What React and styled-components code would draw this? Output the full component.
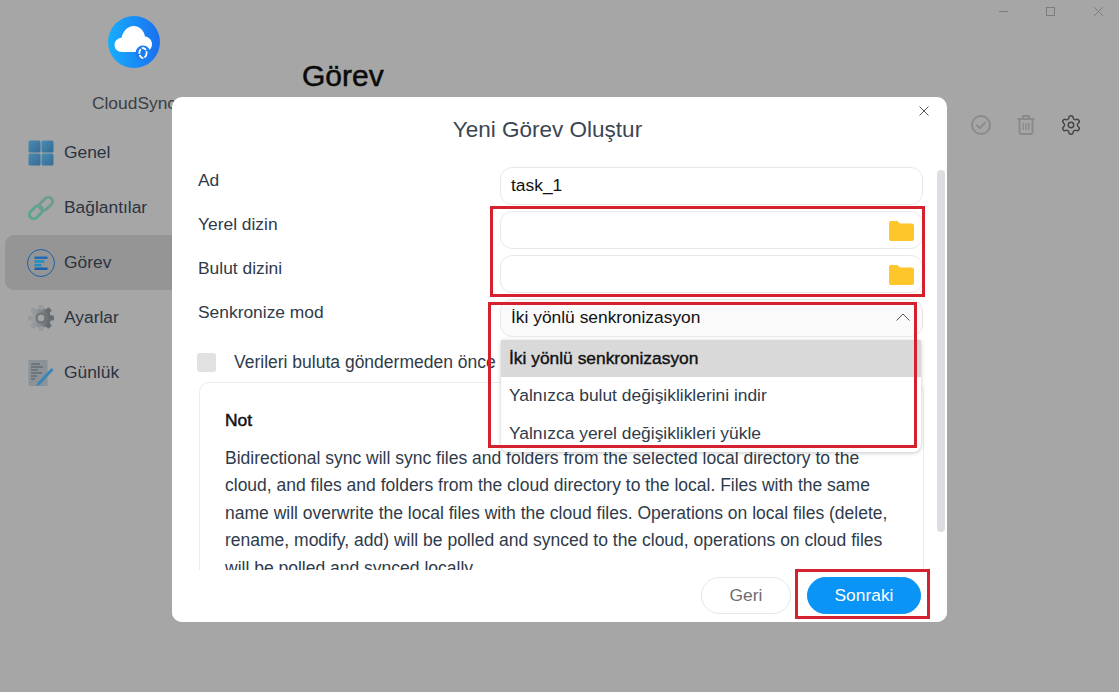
import React from "react";
import styled, { createGlobalStyle } from "styled-components";
import { Settings } from "lucide-react";

const Global = createGlobalStyle`
  html, body {
    margin: 0;
    padding: 0;
    height: 100%;
    overflow: hidden;
  }
  body {
    font-family: "Liberation Sans", Arial, sans-serif;
    background: #a6a6a6;
  }
`;

const Page = styled.div`
  position: relative;
  width: 1119px;
  height: 692px;
  overflow: hidden;
  display: flex;
  background: #a6a6a6;
`;

const Sidebar = styled.aside`
  width: 172px;
  flex: none;
  padding: 16px 0 0 5px;
  box-sizing: border-box;
`;

const Brand = styled.div`
  width: 258px;
  display: flex;
  flex-direction: column;
  align-items: center;
  gap: 26px;
  color: #3a3f45;
  font-size: 17.4px;
  line-height: 18px;
  margin-bottom: 13px;
`;

const NavList = styled.nav`
  display: flex;
  flex-direction: column;
  width: 200px;
`;

const NavItem = styled.div`
  height: 55px;
  display: flex;
  align-items: center;
  gap: 10px;
  padding-left: 23px;
  border-radius: 9px;
  font-size: 17.4px;
  color: #2b3340;
  background: ${(p) => (p.$active ? "#959595" : "transparent")};
  svg {
    flex: none;
    width: 26px;
    height: 26px;
    overflow: visible;
  }
`;

const Main = styled.main`
  flex: 1;
  padding: 60px 0 0 130px;
  position: relative;
`;

const PageTitle = styled.h1`
  margin: 0;
  font-size: 30px;
  line-height: 32px;
  font-weight: 400;
  color: #0a0a0a;
  -webkit-text-stroke: 0.5px #0a0a0a;
`;

const WindowControls = styled.div`
  position: absolute;
  top: 3px;
  right: -3px;
  display: flex;
  align-items: center;
  color: #7d7d7d;
`;

const WinButton = styled.span`
  width: 47.500px;
  height: 16px;
  display: flex;
  align-items: center;
  justify-content: center;
  svg {
    width: 11px;
    height: 11px;
  }
`;

const Toolbar = styled.div`
  position: absolute;
  top: 112px;
  right: 37px;
  display: flex;
  gap: 23px;
`;

const ToolIcon = styled.span`
  display: block;
  width: 22px;
  height: 26px;
  color: ${(p) => (p.$on ? "#454545" : "#8b8b8b")};
  svg {
    width: 22px;
    height: 26px;
    display: block;
  }
`;

const Modal = styled.section`
  position: absolute;
  left: 172px;
  top: 97px;
  width: 775px;
  height: 525px;
  background: #fff;
  border-radius: 10px;
  overflow: hidden;
`;

const CloseBtn = styled.span`
  position: absolute;
  right: 17px;
  top: 8px;
  width: 12px;
  height: 12px;
  color: #555;
  svg {
    display: block;
    width: 12px;
    height: 12px;
  }
`;

const ModalTitle = styled.h2`
  margin: 0;
  padding: 20px 24px 0 0;
  height: 70px;
  box-sizing: border-box;
  text-align: center;
  font-size: 22.500px;
  line-height: 26px;
  font-weight: 400;
  color: #3b4654;
`;

const Body = styled.div`
  position: relative;
  padding: 0 24px 0 26px;
`;

const FormRow = styled.div`
  display: grid;
  grid-template-columns: 302px 423px;
  height: 38px;
  margin-bottom: 6px;
`;

const Label = styled.label`
  font-size: 17.400px;
  line-height: 27px;
  color: #2f3b4a;
`;

const Field = styled.div`
  position: relative;
  box-sizing: border-box;
  height: 38px;
  border: 1px solid #e8e8e8;
  border-radius: 12px;
  display: flex;
  align-items: center;
  justify-content: space-between;
  padding: 0 8px 2px 10px;
  font-size: 17.400px;
  color: #111;
  background: ${(p) => (p.$open ? "#fafafa" : "#fff")};
`;

const Chevron = styled.svg`
  width: 14px;
  height: 8px;
  margin-right: 4px;
  color: #555;
`;

const FolderIcon = styled.svg`
  width: 26px;
  height: 22px;
  margin-top: 3px;
`;

const Menu = styled.ul`
  position: absolute;
  left: 0;
  top: 40px;
  z-index: 3;
  width: 420px;
  margin: 0;
  padding: 0;
  list-style: none;
  background: #fff;
  border-radius: 0 0 8px 8px;
  box-shadow: 0 1px 4px rgba(0, 0, 0, 0.22);
`;

const MenuItem = styled.li`
  height: 37.300px;
  line-height: 36px;
  padding-left: 8px;
  font-size: 17.400px;
  color: ${(p) => (p.$selected ? "#111" : "#2f3b4a")};
  background: ${(p) => (p.$selected ? "#d9d9d9" : "transparent")};
  -webkit-text-stroke: ${(p) => (p.$selected ? "0.4px #111" : "0")};
`;

const CheckRow = styled.div`
  display: flex;
  align-items: center;
  gap: 18px;
  height: 20px;
  margin: 15px 0 0 -1px;
  font-size: 17.500px;
  color: #2f3b4a;
  white-space: nowrap;
`;

const Check = styled.span`
  width: 19px;
  height: 19px;
  border-radius: 3px;
  background: #e1e1e1;
`;

const Note = styled.div`
  margin: 10px 0 0 1px;
  width: 725px;
  height: 240px;
  box-sizing: border-box;
  padding: 27px 28px 0 25px;
  border: 1px solid #ececec;
  border-radius: 10px;
  overflow: hidden;
`;

const NoteTitle = styled.div`
  font-size: 17.400px;
  line-height: 20px;
  color: #111;
  -webkit-text-stroke: 0.5px #111;
  margin-bottom: 15px;
`;

const NoteText = styled.p`
  margin: 0;
  font-size: 17.500px;
  line-height: 27.400px;
  color: #2f3b4a;
`;

const Scrollbar = styled.div`
  position: absolute;
  right: 2px;
  top: 73px;
  width: 8px;
  height: 362px;
  border-radius: 4px;
  background: #dcdde0;
`;

const Footer = styled.div`
  position: absolute;
  left: 0;
  right: 0;
  bottom: 0;
  height: 52px;
  padding: 7px 26px 0 0;
  box-sizing: border-box;
  background: #fff;
  display: flex;
  justify-content: flex-end;
  gap: 16px;
`;

const Button = styled.button`
  width: ${(p) => (p.$primary ? "114px" : "90px")};
  height: 37px;
  border-radius: 19px;
  padding: 0;
  font: inherit;
  font-size: 17.400px;
  border: 1px solid ${(p) => (p.$primary ? "#0a94f5" : "#e6e6e6")};
  background: ${(p) => (p.$primary ? "#0a94f5" : "#fff")};
  color: ${(p) => (p.$primary ? "#fff" : "#6e6e6e")};
`;

const Callout = styled.div`
  position: absolute;
  z-index: 5;
  box-sizing: border-box;
  border: 3px solid #d5202e;
  left: ${(p) => p.$x}px;
  top: ${(p) => p.$y}px;
  width: ${(p) => p.$w}px;
  height: ${(p) => p.$h}px;
`;

const Logo = () => (
  <svg width="52" height="52" viewBox="0 0 52 52">
    <defs>
      <linearGradient id="logoBg" x1="0" y1="0" x2="1" y2="0">
        <stop offset="0" stopColor="#17aefc" />
        <stop offset="1" stopColor="#1a6ff0" />
      </linearGradient>
    </defs>
    <circle cx="26" cy="26" r="26" fill="url(#logoBg)" />
    <path
      d="M14 36c-4.500 0-7.500-3-7.500-7s3-7 7-7.300C15 15 20 10 25.500 10c6 0 10.500 4.500 11.500 10.500 4 .5 7 3.500 7 7.500 0 4.500-3.500 8-8 8z"
      fill="#fff"
    />
    <circle cx="35" cy="37" r="7.500" fill="#1a7cf2" />
    <ellipse cx="35" cy="37" rx="3.600" ry="5" fill="none" stroke="#fff" strokeWidth="1.800" strokeDasharray="5 1.200" />
  </svg>
);

const GridIcon = () => (
  <svg viewBox="0 0 26 26">
    <defs>
      <linearGradient id="gridFill" x1="0" y1="0" x2="1" y2="1">
        <stop offset="0" stopColor="#4b8db2" />
        <stop offset="1" stopColor="#346a96" />
      </linearGradient>
    </defs>
    <rect x="0.500" y="0.500" width="12" height="12" rx="1.500" fill="url(#gridFill)" />
    <rect x="13.500" y="0.500" width="12" height="12" rx="1.500" fill="url(#gridFill)" />
    <rect x="0.500" y="13.500" width="12" height="12" rx="1.500" fill="url(#gridFill)" />
    <rect x="13.500" y="13.500" width="12" height="12" rx="1.500" fill="url(#gridFill)" />
  </svg>
);

const LinkIcon = () => (
  <svg viewBox="0 0 26 26" fill="none">
    <rect x="0.500" y="13" width="15" height="8.500" rx="4.250" transform="rotate(-45 8 17.250)" stroke="#5aa68e" strokeWidth="3" />
    <rect x="10.500" y="4.500" width="15" height="8.500" rx="4.250" transform="rotate(-45 18 8.750)" stroke="#6c9c92" strokeWidth="3" />
  </svg>
);

const TaskIcon = () => (
  <svg viewBox="0 0 26 26" fill="none">
    <circle cx="13" cy="13" r="13.500" stroke="#1d5fa8" strokeWidth="1" />
    <rect x="6.500" y="6.500" width="13" height="2.500" fill="#1c6cba" />
    <rect x="6.500" y="10.200" width="10" height="2.500" fill="#1c90c4" />
    <rect x="6.500" y="13.900" width="7" height="2.500" fill="#1c90c4" />
    <rect x="6.500" y="17.500" width="13" height="2.500" fill="#1c5fb0" />
  </svg>
);

const GearIcon = () => (
  <svg viewBox="0 0 26 26">
    <defs>
      <linearGradient id="gearFill" x1="0" y1="0" x2="1" y2="0">
        <stop offset="0" stopColor="#a2a7a7" />
        <stop offset="1" stopColor="#5f676c" />
      </linearGradient>
    </defs>
    <g fill="url(#gearFill)">
      <circle cx="13" cy="13" r="10" />
    </g>
    {[0, 45, 90, 135, 180, 225, 270, 315].map((deg) => (
      <rect
        key={deg}
        x="10.500"
        y="0"
        width="5"
        height="5"
        rx="1"
        fill={deg > 0 && deg < 180 ? "#666d71" : "#959a9a"}
        transform={`rotate(${deg} 13 13)`}
      />
    ))}
    <circle cx="13" cy="13" r="5.500" fill="#70777a" />
    <circle cx="13" cy="13" r="3.200" fill="#a6a8a8" />
  </svg>
);

const LogIcon = () => (
  <svg viewBox="0 0 26 26" fill="none">
    <path d="M0.500 0h19v26h-19z" fill="#8b9298" />
    <path d="M3 4h9M3 7h12M3 10h7M3 13h11M3 16h6M3 19h4" stroke="#55595e" strokeWidth="1" />
    <path d="M10.500 24 L24.500 9" stroke="#3a85b8" strokeWidth="3" />
    <path d="M8.500 26 L9.500 23 L11.500 25z" fill="#3a85b8" />
  </svg>
);

const Folder = () => (
  <FolderIcon viewBox="0 0 26 22">
    <path
      d="M1 3a2 2 0 0 1 2-2h6.500l2.500 2.500h12a2 2 0 0 1 2 2V19a2 2 0 0 1-2 2H3a2 2 0 0 1-2-2z"
      fill="#ffc629"
    />
  </FolderIcon>
);

const items = [
  { name: "Genel", icon: <GridIcon /> },
  { name: "Bağlantılar", icon: <LinkIcon /> },
  { name: "Görev", icon: <TaskIcon />, active: true },
  { name: "Ayarlar", icon: <GearIcon /> },
  { name: "Günlük", icon: <LogIcon /> },
];

const App = () => {
  return (
    <Page>
      <Global />
      <Sidebar>
        <Brand>
          <Logo />
          <span>CloudSync</span>
        </Brand>
        <NavList>
          {items.map((item) => (
            <NavItem key={item.name} $active={item.active}>
              {item.icon}
              {item.name}
            </NavItem>
          ))}
        </NavList>
      </Sidebar>

      <Main>
        <PageTitle>Görev</PageTitle>
        <WindowControls>
          <WinButton>
            <svg viewBox="0 0 11 11"><path d="M1 5.500h9" stroke="currentColor" /></svg>
          </WinButton>
          <WinButton>
            <svg viewBox="0 0 11 11"><rect x="1.500" y="1.500" width="8" height="8" fill="none" stroke="currentColor" /></svg>
          </WinButton>
          <WinButton>
            <svg viewBox="0 0 11 11"><path d="M1 1l9 9M10 1l-9 9" stroke="currentColor" /></svg>
          </WinButton>
        </WindowControls>
        <Toolbar>
          <ToolIcon>
            <svg viewBox="0 0 22 26" fill="none" stroke="currentColor" strokeWidth="2">
              <circle cx="11" cy="13" r="9" />
              <path d="M6.500 13l3.200 3.200 5.800-5.800" />
            </svg>
          </ToolIcon>
          <ToolIcon>
            <svg viewBox="0 0 22 26" fill="none" stroke="currentColor" strokeWidth="2" strokeLinejoin="round">
              <path d="M2.500 7h17M8 7V4h6v3M4.500 7v13a2 2 0 0 0 2 2h9a2 2 0 0 0 2-2V7" />
              <path d="M8.300 11v7M11 11v7M13.700 11v7" strokeWidth="1.400" />
            </svg>
          </ToolIcon>
          <ToolIcon $on>
            <Settings size={22} strokeWidth={1.6} />
          </ToolIcon>
        </Toolbar>
      </Main>

      <Modal>
        <CloseBtn>
          <svg viewBox="0 0 12 12"><path d="M1.500 1.500l9 9M10.500 1.500l-9 9" stroke="currentColor" /></svg>
        </CloseBtn>
        <ModalTitle>Yeni Görev Oluştur</ModalTitle>
        <Body>
          <FormRow>
            <Label>Ad</Label>
            <Field>task_1</Field>
          </FormRow>
          <FormRow>
            <Label>Yerel dizin</Label>
            <Field><span /><Folder /></Field>
          </FormRow>
          <FormRow>
            <Label>Bulut dizini</Label>
            <Field><span /><Folder /></Field>
          </FormRow>
          <FormRow>
            <Label>Senkronize mod</Label>
            <Field $open>
              İki yönlü senkronizasyon
              <Chevron viewBox="0 0 14 8" fill="none" stroke="currentColor">
                <path d="M.5 7.500L7 1l6.500 6.500" />
              </Chevron>
              <Menu>
                <MenuItem $selected>İki yönlü senkronizasyon</MenuItem>
                <MenuItem>Yalnızca bulut değişikliklerini indir</MenuItem>
                <MenuItem>Yalnızca yerel değişiklikleri yükle</MenuItem>
              </Menu>
            </Field>
          </FormRow>
          <CheckRow>
            <Check />
            Verileri buluta göndermeden önce
          </CheckRow>
          <Note>
            <NoteTitle>Not</NoteTitle>
            <NoteText>
              Bidirectional sync will sync files and folders from the selected local directory to the
              cloud, and files and folders from the cloud directory to the local. Files with the same
              name will overwrite the local files with the cloud files. Operations on local files (delete,
              rename, modify, add) will be polled and synced to the cloud, operations on cloud files
              will be polled and synced locally.
            </NoteText>
          </Note>
        </Body>
        <Scrollbar />
        <Footer>
          <Button>Geri</Button>
          <Button $primary>Sonraki</Button>
        </Footer>
      </Modal>

      <Callout $x={490} $y={206} $w={435} $h={91} />
      <Callout $x={488} $y={302} $w={429} $h={146} />
      <Callout $x={795} $y={569} $w={135} $h={50} />
    </Page>
  );
};

export default App;
